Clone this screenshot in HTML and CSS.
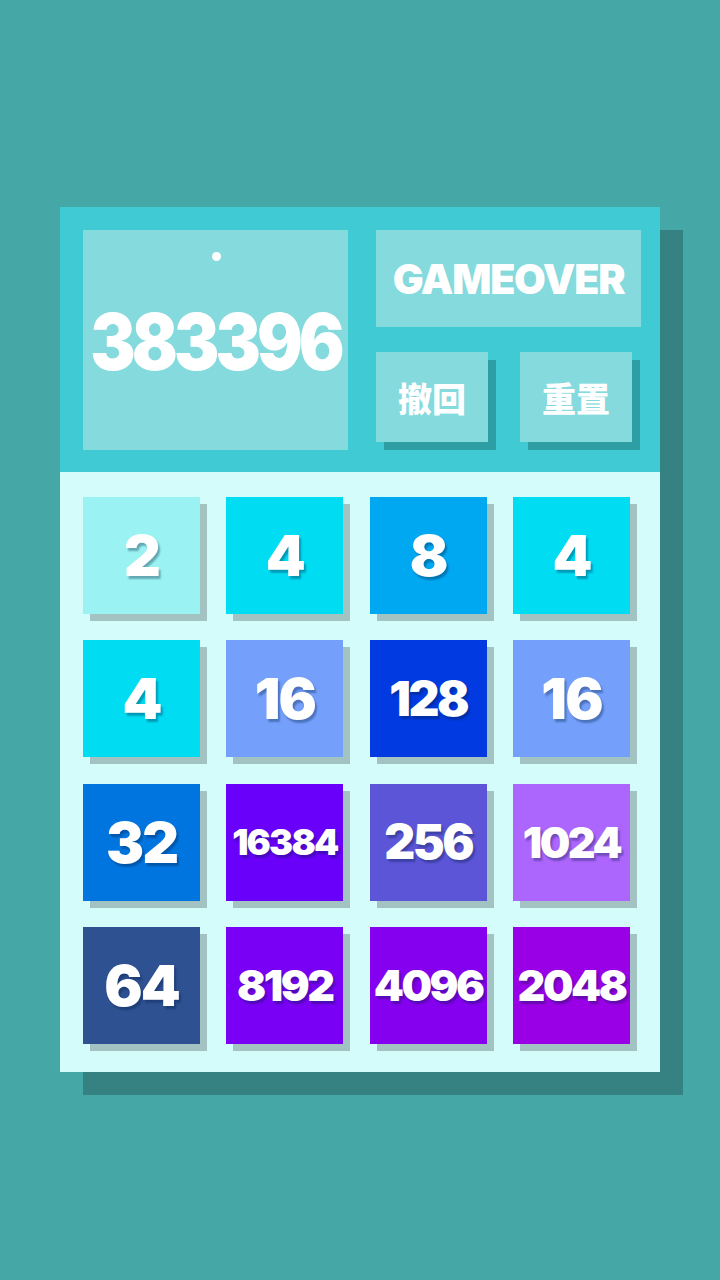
FILE: index.html
```html
<!DOCTYPE html>
<html lang="zh">
<head>
<meta charset="utf-8">
<title>2048</title>
<link rel="stylesheet" href="styles.css">
</head>
<body>
<div class="page">
  <div class="card">
    <div class="header">
      <div class="score-box">
        <span class="dot"></span>
        <span class="score">383396</span>
      </div>
      <div class="controls">
        <div class="status">GAMEOVER</div>
        <div class="buttons">
          <div class="btn">撤回</div>
          <div class="btn">重置</div>
        </div>
      </div>
    </div>
    <div class="board">
      <div class="tile t2">2</div>
      <div class="tile t4">4</div>
      <div class="tile t8">8</div>
      <div class="tile t4">4</div>
      <div class="tile t4">4</div>
      <div class="tile t16">16</div>
      <div class="tile t128 d3">128</div>
      <div class="tile t16">16</div>
      <div class="tile t32">32</div>
      <div class="tile t16384 d5">16384</div>
      <div class="tile t256 d3">256</div>
      <div class="tile t1024 d4">1024</div>
      <div class="tile t64">64</div>
      <div class="tile t8192 d4">8192</div>
      <div class="tile t4096 d4">4096</div>
      <div class="tile t2048 d4">2048</div>
    </div>
  </div>
</div>
</body>
</html>
```

FILE: styles.css
```css
html, body {
  margin: 0;
  padding: 0;
  background: #46a7a7;
}
body {
  width: 720px;
  height: 1280px;
  overflow: hidden;
  font-family: "Inter", "Lato", "Noto Sans", "Noto Sans CJK SC", sans-serif;
  color: #ffffff;
}
.page {
  padding: 207px 0 0 60px;
}
.card {
  width: 600px;
  box-shadow: 23px 23px 0 #368181;
}
.header {
  height: 265px;
  box-sizing: border-box;
  padding: 23px 19px 22px 23px;
  background: #40cad3;
  display: flex;
  gap: 28px;
}
.score-box {
  width: 265px;
  height: 220px;
  background: #84dadd;
  display: flex;
  flex-direction: column;
  align-items: center;
}
.dot {
  width: 9px;
  height: 9px;
  border-radius: 50%;
  background: #ffffff;
  margin-top: 22px;
  margin-left: 2px;
}
.score {
  margin-top: 46px;
  font-size: 68px;
  font-weight: 900;
  line-height: 1;
  letter-spacing: -4px;
  transform: scaleY(1.15);
}
.controls {
  width: 265px;
  display: flex;
  flex-direction: column;
  gap: 25px;
}
.status {
  height: 97px;
  background: #84dadd;
  display: flex;
  align-items: center;
  justify-content: center;
  font-size: 41px;
  font-weight: 900;
  letter-spacing: -1.2px;
}
.buttons {
  display: flex;
  gap: 32px;
}
.btn {
  width: 112px;
  height: 90px;
  background: #84dadd;
  box-shadow: 8px 8px 0 #2d9fa4;
  display: flex;
  align-items: center;
  justify-content: center;
  font-family: "Noto Sans CJK SC", sans-serif;
  font-size: 34px;
  font-weight: 900;
}
.board {
  background: #d4fcfb;
  padding: 25px 30px 28px 23px;
  display: grid;
  grid-template-columns: repeat(4, 117px);
  grid-auto-rows: 117px;
  gap: 26.33px;
}
.tile {
  box-shadow: 7px 7px 0 #a3c2c2;
  display: flex;
  align-items: center;
  justify-content: center;
  font-size: 57px;
  font-weight: 900;
  line-height: 1;
  letter-spacing: -2px;
  text-shadow: 2px 3px 2px rgba(0, 30, 70, 0.35);
}
.tile.d3 { font-size: 48px; letter-spacing: -2.5px; }
.tile.d4 { font-size: 43px; letter-spacing: -2.5px; }
.tile.d5 { font-size: 36px; letter-spacing: -1.8px; }
.t2 { background: #9af3f2; }
.t4 { background: #00dcf2; }
.t8 { background: #00a8f2; }
.t16 { background: #74a0fc; }
.t32 { background: #0075e0; }
.t64 { background: #2e5192; }
.t128 { background: #003ae0; }
.t256 { background: #5d55d8; }
.t1024 { background: #ad66fd; }
.t2048 { background: #9a00e6; }
.t4096 { background: #8500ee; }
.t8192 { background: #7a00f5; }
.t16384 { background: #6900fa; }
```
